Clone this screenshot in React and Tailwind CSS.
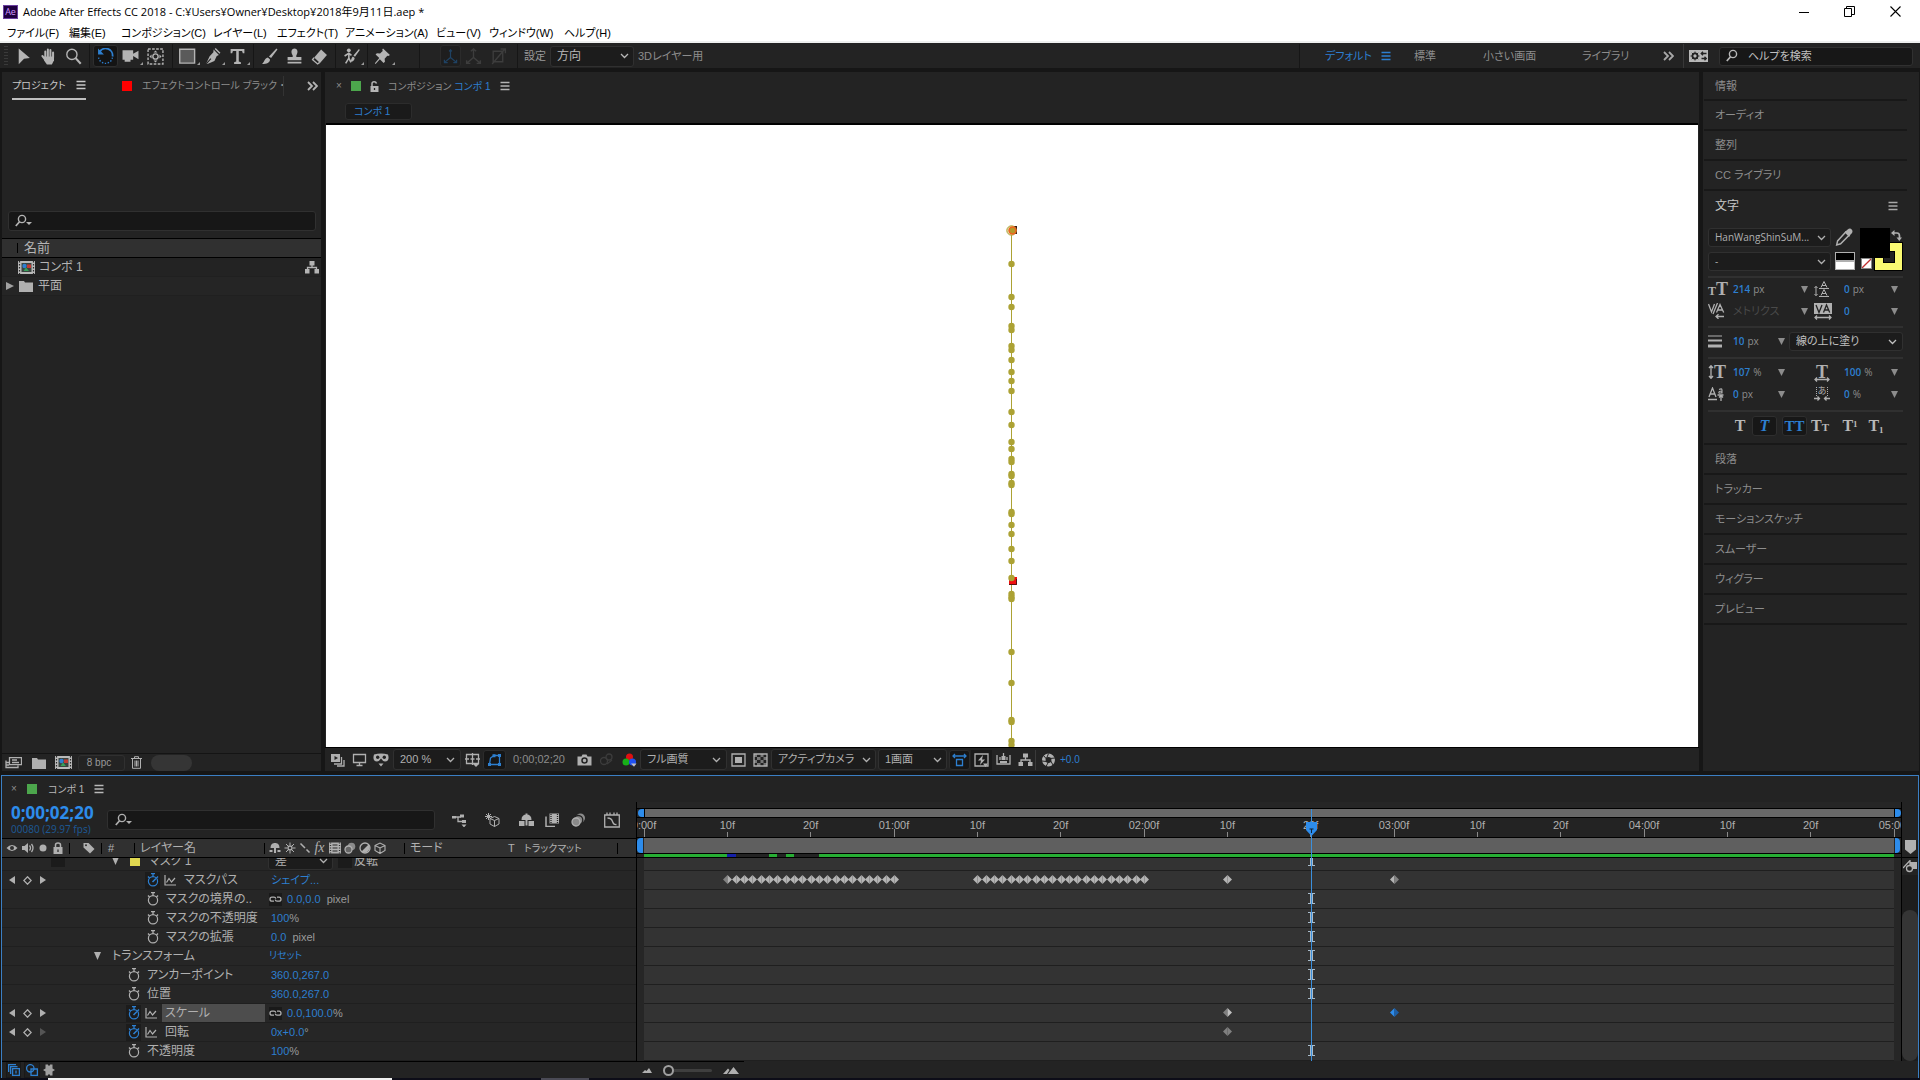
import React from "react";

const JP = "font-['Liberation_Sans','Noto_Sans_CJK_JP',sans-serif] [font-feature-settings:'palt']";

/* ---------- shared pieces ---------- */

function Icon({ children, className = "size-4", box = "0 0 16 16" }) {
  return (
    <svg viewBox={box} className={`shrink-0 ${className}`} fill="none" stroke="currentColor" strokeWidth="1.3" aria-hidden="true">
      {children}
    </svg>
  );
}

function Burger({ className = "" }) {
  return (
    <button aria-label="パネルメニュー" className={`flex h-4 shrink-0 items-center ${className}`}>
      <Icon className="size-[10px]" box="0 0 10 10">
        <path d="M0.5 1.5h9M0.5 5h9M0.5 8.5h9" />
      </Icon>
    </button>
  );
}

function DoubleChevron() {
  return (
    <Icon className="h-[10px] w-[11px]" box="0 0 11 10">
      <path d="M1 1l4 4-4 4M6 1l4 4-4 4" strokeWidth="1.8" />
    </Icon>
  );
}

function Select({ options, label, className = "", chevron = "right-2", text = "text-[11px]" }) {
  return (
    <label className={`relative flex shrink-0 items-center rounded-[3px] border border-[#303030] bg-[#1c1c1c] ${className}`}>
      <select aria-label={label} className={`h-full w-full appearance-none truncate bg-transparent pl-[6px] pr-4 leading-[15px] outline-none ${text}`}>
        {options.map((o) => (
          <option key={o}>{o}</option>
        ))}
      </select>
      <Icon className={`pointer-events-none absolute h-[6px] w-[9px] ${chevron}`} box="0 0 9 6">
        <path d="M1 1l3.500 3.500L8 1" />
      </Icon>
    </label>
  );
}

function SearchGlyph({ caret }) {
  return (
    <Icon className="h-[14px] w-[18px]" box="0 0 18 14">
      <circle cx="7" cy="5" r="3.600" strokeWidth="1.4" />
      <path d="M4.500 7.800L0.800 12" strokeWidth="1.7" />
      {caret && <path d="M11 8h6l-3 3z" fill="currentColor" stroke="none" />}
    </Icon>
  );
}

function Down({ className = "" }) {
  return (
    <Icon className={`h-[7px] w-[7px] ${className}`} box="0 0 7 7">
      <path d="M0 0h7L3.500 7z" fill="#8c8c8c" stroke="none" />
    </Icon>
  );
}

function FlowIcon({ className = "h-[13px] w-[14px]" }) {
  return (
    <Icon className={className} box="0 0 14 13">
      <path d="M4.500 0h5v4.500h-5zM0 8h4.500v4.500H0zM9.500 8H14v4.500H9.500z" fill="currentColor" stroke="none" />
      <path d="M7 4v2.500M2.500 8V6.500h9V8" />
    </Icon>
  );
}

function CompIcon() {
  return (
    <Icon className="h-[13px] w-[17px]" box="0 0 17 13">
      <path d="M0 0h17v13H0z" fill="#b9b9b9" stroke="none" />
      <path d="M1.500 0v13M15.500 0v13" stroke="#2b2b2b" strokeWidth="1.2" strokeDasharray="1.500 1.500" />
      <path d="M3.500 2h10v9h-10z" fill="#3a4440" stroke="none" />
      <circle cx="6.500" cy="5" r="2.200" fill="#2f7fd0" stroke="none" />
      <path d="M9 3.500h4v3.500H9z" fill="#c23a32" stroke="none" />
      <path d="M5.500 10l2.500-3.500 3 3.500z" fill="#37a05a" stroke="none" />
    </Icon>
  );
}

function FolderIcon() {
  return (
    <Icon className="h-[12px] w-[14px]" box="0 0 14 12">
      <path d="M0 1h5l1 1.500H14V12H0z" fill="#b0b0b0" stroke="none" />
    </Icon>
  );
}

/* ---------- window chrome ---------- */

const MENUS = [
  ["ファイル(F)", "w-[62px]"],
  ["編集(E)", "w-[52px]"],
  ["コンポジション(C)", "w-[92px]"],
  ["レイヤー(L)", "w-[64px]"],
  ["エフェクト(T)", "w-[68px]"],
  ["アニメーション(A)", "w-[91px]"],
  ["ビュー(V)", "w-[53px]"],
  ["ウィンドウ(W)", "w-[75px]"],
  ["ヘルプ(H)", "w-[60px]"],
];

function TitleBar() {
  return (
    <header className="shrink-0 border-b-2 border-[#eef0ef] bg-white text-black">
      <div className="flex h-[23px] items-center">
        <span className="ml-[3px] flex h-[14px] w-[15px] items-center justify-center border border-[#6b3fa0] bg-[#1f0040] font-['Open_Sans'] text-[9px] leading-none text-[#cf96fd]">
          Ae
        </span>
        <h1 className="ml-[5px] font-['Open_Sans','Noto_Sans_CJK_JP',sans-serif] text-[11px] leading-[16px]">
          Adobe After Effects CC 2018 - C:¥Users¥Owner¥Desktop¥2018年9月11日.aep *
        </h1>
        <div className="ml-auto flex items-center pr-[2px]">
          <button aria-label="最小化" className="flex h-5 w-[45px] items-center justify-center">
            <Icon className="size-[10px]" box="0 0 10 10"><path d="M0 5.500h10" strokeWidth="1" /></Icon>
          </button>
          <button aria-label="元に戻す" className="flex h-5 w-[46px] items-center justify-center">
            <Icon className="size-[11px]" box="0 0 11 11"><path d="M0.500 2.500h7v8h-7zM2.500 2.500v-2h8v8h-3" strokeWidth="1" /></Icon>
          </button>
          <button aria-label="閉じる" className="flex h-5 w-[46px] items-center justify-center">
            <Icon className="size-[11px]" box="0 0 11 11"><path d="M0.500 0.500l10 10M10.500 0.500l-10 10" strokeWidth="1.1" /></Icon>
          </button>
        </div>
      </div>
      <nav className="flex h-[18px] items-center pl-[7px] pt-[2px] text-[11px] leading-[16px]">
        {MENUS.map(([t, w]) => (
          <button key={t} className={`shrink-0 whitespace-nowrap text-left ${w}`}>{t}</button>
        ))}
      </nav>
    </header>
  );
}

function Tool({ label, children, active, more, dim }) {
  return (
    <button
      aria-label={label}
      className={`relative flex h-[22px] w-[25px] shrink-0 items-center justify-center rounded-[3px] ${active ? "border border-[#2e2e2e] bg-[#141414] text-[#2d7fd0]" : dim ? "text-[#3d3d3d]" : "text-[#b4b4b4]"}`}
    >
      <Icon className="size-[17px]">{children}</Icon>
      {more && <span className="absolute bottom-[2px] right-0 size-[3px] bg-[#9a9a9a] [clip-path:polygon(100%_0,100%_100%,0_100%)]" />}
    </button>
  );
}

function Bar({ className = "mx-[3px]" }) {
  return <span className={`h-[24px] w-px shrink-0 bg-[#161616] ${className}`} />;
}

function ToolBar() {
  const f = { fill: "currentColor", stroke: "none" };
  return (
    <div className="flex h-[25px] shrink-0 items-center bg-[#232323] pt-px text-[11px] text-[#8d8d8d]">
      <span className="ml-1 mr-[3px] h-[20px] w-1 shrink-0 bg-[repeating-linear-gradient(#3a3a3a_0_1px,transparent_1px_3px)]" />
      <Tool label="選択ツール"><path d="M3.500 0.500L14 9.500l-5.500 0.700-5 5z" {...f} /></Tool>
      <Tool label="手のひらツール">
        <path d="M5 9V3.200M7.400 8V1.500M9.800 8V2M12.300 9V4.300M5.500 12L2.200 7.500" strokeWidth="1.900" strokeLinecap="round" />
        <path d="M4.200 8h9v3.500l-2 4H6.500L4 12z" {...f} />
      </Tool>
      <Tool label="ズームツール"><circle cx="6.500" cy="6" r="4.800" /><path d="M10 9.500l4.800 5.300" strokeWidth="2" /></Tool>
      <Bar />
      <Tool label="回転ツール" active>
        <path d="M2.500 3.500A6.600 6.600 0 0 1 14.600 8" strokeWidth="1.700" />
        <path d="M14.500 9a6.600 6.600 0 0 1-13 0" strokeDasharray="1.300 1.500" />
        <path d="M1 0.500V6h5.500z" {...f} />
      </Tool>
      <Tool label="カメラツール" more><path d="M0.500 2h10v3.500l5-3v8l-5-3V11H8v2H2.500v-2h-2z" {...f} /></Tool>
      <Tool label="アンカーポイントツール">
        <path d="M1 1h14v14H1z" strokeDasharray="2.500 1.300" />
        <circle cx="8" cy="8" r="2.500" />
        <path d="M8 2.300l1.800 2H6.200zM8 13.700l1.800-2H6.200zM2.300 8l2-1.800v3.600zM13.700 8l-2-1.800v3.600z" {...f} />
      </Tool>
      <Bar className="ml-1 mr-[2px]" />
      <Tool label="長方形ツール" more><path d="M0.700 1.200h14v13h-14z" fill="#5a5a5a" /></Tool>
      <Tool label="ペンツール" more>
        <path d="M9 1.500l5 5-2 1-2.200 4.700-6.600 2.800L2.300 14l3-6.300L8.800 4zM11 0l4.500 4.500-1 1L10 1z" {...f} />
        <path d="M2.500 14.500l4-4.500" stroke="#232323" strokeWidth="1" />
      </Tool>
      <Tool label="文字ツール" more><path d="M1.500 1h13v4H13L12.300 2.800H9.200v10l2 0.700V15h-6.400v-1.500l2-0.700v-10H3.700L3 5H1.500z" {...f} /></Tool>
      <Bar />
      <Tool label="ブラシツール"><path d="M14.500 0.500l1 1-6 8-2-1.500zM6.500 9l2 1.800c0 3-3 4.200-7.500 4.200 2-1 1.800-5 5.500-6z" {...f} /></Tool>
      <Tool label="コピースタンプツール"><path d="M6.300 7C4 3.500 5.500 0.500 8 0.500S12 3.500 9.700 7v1.500H14.500v3h-13v-3h4.800zM1.500 13h13v1.500h-13z" {...f} /></Tool>
      <Tool label="消しゴムツール"><path d="M9.500 1.500l5.500 5-6.500 7.500-5.500-5z" {...f} /><path d="M2.800 9.200L1.500 11l4.700 4 2-1.500" /></Tool>
      <Bar />
      <Tool label="ロトブラシツール" more>
        <circle cx="5.500" cy="2.200" r="1.800" {...f} />
        <path d="M5.500 4.500v5L2.500 14.500M5.500 9.500l2 4M1.500 7.500l4-2.500 2.500 2" strokeWidth="1.500" />
        <path d="M15 1l0.800 0.800-4.500 6.500-1.500-1.200zM9.300 8l1.700 1.500c-0.500 3-2 3.500-4.500 3.500 1.500-1 1-4 2.800-5z" {...f} />
      </Tool>
      <Bar className="ml-[3px] mr-[2px]" />
      <Tool label="パペットピンツール" more><path d="M8.500 0.500l6.500 6-1.500 1-1-0.300L10 10l0.300 3-1.300 1-3.500-3.300L1.500 15l-0.700-0.700L5 9.500 1.500 6.200l1.200-1.200 3 0.200L8.200 2.800 7.800 1.500z" {...f} /></Tool>
      <Bar className="ml-[24px] mr-[20px]" />
      <span className="flex text-[#1f4263]">
        <button aria-label="ローカル軸モード" className="flex h-[22px] w-[21px] items-center justify-center rounded-[3px] border border-[#2b2b2b] bg-[#1e1e1e]">
          <Icon className="size-[15px]"><path d="M8 9V1M8 9l-6 5M8 9l6 5M6.500 2.500L8 0.800l1.500 1.700M1.500 11.500v3H5M14.500 11.500v3H11" /></Icon>
        </button>
      </span>
      <Tool label="ワールド軸モード" dim><path d="M8 9V1M8 9l-6 5M8 9l6 5M5.500 3L8 0.800 10.500 3M1.500 11.500v3H5M14.500 11.500v3H11" /></Tool>
      <Tool label="ビュー軸モード" dim><path d="M3 3h9v10H3zM2 15L14 1M10 1h4.500v4" /></Tool>
      <Bar className="ml-[6px] mr-[6px]" />
      <span className="w-[26px] shrink-0 text-[#9a9a9a]">設定</span>
      <Select label="設定" options={["方向"]} className="h-[21px] w-[84px] text-[#b8b8b8]" chevron="right-1" text="text-[12px]" />
      <span className="ml-[4px] shrink-0">3Dレイヤー用</span>

      <div className="ml-auto flex h-full shrink-0 items-center">
        <Bar className="mr-[25px]" />
        <button className="w-[56px] text-left text-[#2d7fd0]">デフォルト</button>
        <Burger className="w-[33px] text-[#2d7fd0]" />
        <button className="w-[69px] text-left">標準</button>
        <button className="w-[99px] text-left">小さい画面</button>
        <button className="w-[81px] text-left">ライブラリ</button>
        <button aria-label="その他のワークスペース" className="w-[20px] text-[#a8a8a8]"><DoubleChevron /></button>
        <span className="mr-[5px] h-full w-px bg-[#383838]" />
        <button aria-label="同期設定" className="mr-[11px] text-[#b8b8b8]">
          <Icon className="h-[12px] w-[19px]" box="0 0 19 12">
            <path d="M0 0h19v12H0z" fill="currentColor" stroke="none" />
            <circle cx="6" cy="6" r="2.600" stroke="#232323" strokeWidth="1.600" />
            <path d="M6 1.500v9M1.500 6h9M2.800 2.800l6.400 6.400M9.200 2.800L2.800 9.200" stroke="#232323" strokeWidth="0.900" />
            <circle cx="6" cy="6" r="1.400" fill="currentColor" stroke="none" />
            <path d="M12.500 3.500h5M14 1.700l-1.800 1.800L14 5.300M17 8.500h-4.500M15.500 6.700l1.800 1.800-1.800 1.800" stroke="#232323" />
          </Icon>
        </button>
        <label className="mr-[7px] flex h-[19px] w-[194px] items-center rounded-[3px] border border-[#303030] bg-[#171717] pl-[6px] text-[#b8b8b8]">
          <SearchGlyph />
          <input aria-label="ヘルプを検索" placeholder="ヘルプを検索" className="ml-[4px] w-full bg-transparent outline-none placeholder:text-[#c0c0c0]" />
        </label>
      </div>
    </div>
  );
}

/* ---------- project panel ---------- */

function ProjectPanel() {
  return (
    <section className="flex w-[319px] shrink-0 flex-col bg-[#232323] text-[12px] text-[#b4b4b4]">
      <div className="flex h-[28px] items-center pl-[10px]">
        <div className="mt-[3px] flex h-[25px] w-[74px] shrink-0 items-center justify-between border-b-2 border-[#c0c0c0] pb-[3px] text-[#c8c8c8]">
          <button className="whitespace-nowrap text-[10px]">プロジェクト</button>
          <Burger />
        </div>
        <span className="ml-[36px] size-[10px] shrink-0 bg-[#f00]" />
        <button className="ml-[10px] h-[20px] w-[142px] shrink-0 overflow-hidden whitespace-nowrap border-r border-[#333] text-left text-[10px] leading-[20px] text-[#8d8d8d]">
          エフェクトコントロール ブラック ・
        </button>
        <button aria-label="その他のタブ" className="ml-[23px] text-[#b4b4b4]"><DoubleChevron /></button>
      </div>
      <label className="ml-[6px] mr-[5px] mt-[111px] flex h-[20px] items-center rounded-[3px] border border-[#303030] bg-[#171717] pl-[6px]">
        <SearchGlyph caret />
        <input aria-label="プロジェクトを検索" className="w-full bg-transparent outline-none" />
      </label>
      <div className="mt-[7px] flex h-[20px] items-center border-y border-black bg-[#303030] pl-[15px]">
        <span className="h-[10px] w-px bg-black" />
        <span className="ml-[6px] text-[13px] leading-[18px]">名前</span>
      </div>
      <div className="flex h-[19px] items-center border-b border-[#202020] pl-[16px] pr-[2px]">
        <CompIcon />
        <span className="ml-[4px] flex-1 leading-[18px]">コンポ 1</span>
        <FlowIcon />
      </div>
      <div className="flex h-[19px] items-center border-b border-[#202020] bg-[#252525] pl-[4px]">
        <button aria-label="平面を展開" className="mr-[5px]">
          <Icon className="h-[8px] w-[8px]" box="0 0 8 8"><path d="M0 0l8 4-8 4z" fill="#a0a0a0" stroke="none" /></Icon>
        </button>
        <FolderIcon />
        <span className="ml-[5px] leading-[18px]">平面</span>
      </div>
      <div className="mt-auto flex h-[18px] items-center border-t border-[#141414] pl-[3px] text-[#b0b0b0]">
        <button aria-label="フッテージを変換" className="w-[27px]">
          <Icon className="h-[12px] w-[17px]" box="0 0 17 12"><path d="M4.500 0.700h12v7h-12zM7 3h5M7 5.500h7M1 3.500v7h12v-2M1 5.500h3M1 8h3" /></Icon>
        </button>
        <button aria-label="新規フォルダー" className="w-[23px]"><FolderIcon /></button>
        <button aria-label="新規コンポジション" className="w-[23px]"><CompIcon /></button>
        <button className="h-[16px] w-[47px] rounded-[3px] border border-[#303030] pr-[5px] text-[10px] leading-[14px] text-[#9a9a9a]">8 bpc</button>
        <button aria-label="削除" className="ml-[6px]">
          <Icon className="h-[13px] w-[11px]" box="0 0 11 13"><path d="M0 2.500h11M3.500 2.500v-1.800h4v1.800M1.500 2.500v9.800h8V2.500M4 4.500v6M5.500 4.500v6M7 4.500v6" strokeWidth="1" /></Icon>
        </button>
        <span className="ml-[9px] h-[16px] w-[41px] rounded-full bg-[#353535]" />
      </div>
    </section>
  );
}

/* ---------- composition viewer ---------- */

const DOTS = [
  139, 172, 182, 201, 205, 221, 225, 235, 247, 256, 266, 287, 300, 317, 324, 334, 337, 349, 351, 358, 360, 387, 389,
  400, 409, 424, 436, 453, 469, 472, 474, 527, 558, 595, 597, 616, 620,
];

function MotionPath() {
  return (
    <svg className="absolute inset-y-0 left-1/2 -ml-3 h-full w-5" aria-label="モーションパス">
      <rect x="10" y="101" width="7" height="8" fill="#3c1a10" />
      <path d="M11.500 110V660" stroke="#aca234" />
      <rect x="9" y="452" width="8" height="8" fill="#f01010" />
      <path d="M9 459.500h7.500V454" stroke="#5c1010" fill="none" />
      {DOTS.map((y) => (
        <circle key={y} cx="11.500" cy={y} r="3.200" fill="#aca234" />
      ))}
      <circle cx="11.500" cy="105.500" r="4.700" fill="#e6dcae" stroke="#aca234" strokeWidth="1" />
      <circle cx="12.500" cy="105.500" r="3.400" fill="#b49a2c" stroke="#f0641e" strokeWidth="1.500" />
    </svg>
  );
}

function VBtn({ label, children, className = "", box, size = "h-[14px] w-[15px]" }) {
  return (
    <button aria-label={label} className={`flex h-[20px] shrink-0 items-center justify-center ${className}`}>
      <Icon className={size} box={box || "0 0 15 14"}>{children}</Icon>
    </button>
  );
}

function CompositionPanel() {
  const f = { fill: "currentColor", stroke: "none" };
  return (
    <section className="flex min-w-0 flex-1 flex-col bg-[#232323] text-[11px] text-[#8d8d8d]">
      <div className="flex h-[28px] items-center pl-[11px]">
        <button aria-label="閉じる" className="w-[15px] text-left text-[10px] leading-none">×</button>
        <span className="size-[10px] bg-[#4ca64c]" />
        <button aria-label="ロック" className="ml-[9px] text-[#b4b4b4]">
          <Icon className="h-[11px] w-[9px]" box="0 0 9 11"><path d="M0.500 5h8v6h-8z" {...f} /><path d="M2 5V2.500Q2 0.800 4 0.800T6.500 2.500" strokeWidth="1.500" /><path d="M4.500 7v2" stroke="#232323" /></Icon>
        </button>
        <button className="ml-[9px] whitespace-nowrap text-[10px]">
          コンポジション <span className="text-[#2d7fd0]">コンポ 1</span>
        </button>
        <Burger className="ml-[9px] text-[#b4b4b4]" />
      </div>
      <div className="flex h-[23px] items-center pl-[20px]">
        <button className="h-[17px] w-[67px] rounded-[3px] border border-[#2c2c2c] bg-[#1a1a1a] pl-[8px] text-left text-[10px] leading-[15px] text-[#2d7fd0]">コンポ 1</button>
      </div>
      <div className="relative mx-px min-h-0 flex-1 overflow-hidden border-t-2 border-black bg-white">
        <MotionPath />
      </div>
      <div className="flex h-[24px] shrink-0 items-center border-t border-black pl-px text-[#b0b0b0]">
        <VBtn label="常にプレビュー" className="w-[23px]"><path d="M1 1h9v8H1z" {...f} /><path d="M4.500 3v4l3.500-2z" fill="#232323" stroke="none" /><path d="M11.500 4v7H4M14 7v6H7" /></VBtn>
        <VBtn label="メインビューアー" className="w-[20px]"><path d="M1.500 1.500h12v8h-12zM7.500 10v2M4.500 12.500h6" /></VBtn>
        <VBtn label="ビューアーオプション" className="mx-[2px] w-[20px]" box="0 0 16 14" size="h-[14px] w-[16px]"><path d="M1 1.500Q8-0.500 15 1.500 17 8 12 8.500 9.500 8 8 5.500 6.500 8 4 8.500-1 8 1 1.500zM5.500 10.500h5L8 13.500z" {...f} /><circle cx="4.700" cy="4.300" r="1.700" fill="#232323" stroke="none" /><circle cx="11.300" cy="4.300" r="1.700" fill="#232323" stroke="none" /></VBtn>
        <Select label="拡大率" options={["200 %"]} className="h-[21px] w-[68px]" chevron="right-[5px]" />
        <VBtn label="グリッド" className="w-[22px]"><path d="M1.500 1.500h12v9h-12zM7.500 0v4M7.500 8v4M0 6h4M11 6h4M5.500 6h4M7.500 4v4" /><path d="M8 11h6l-3 3z" {...f} /></VBtn>
        <VBtn label="マスクの表示" className="h-[20px] w-[23px] rounded-[3px] border border-[#2c2c2c] bg-[#161616] text-[#2d7fd0]"><path d="M2.500 11.500L3.500 5 7 2.500h5.500v9z" /><path d="M1 10h3v3H1zM11 10h3v3h-3zM11 1h3v3h-3zM5.500 1.200h3v3h-3z" {...f} /></VBtn>
        <span className="ml-[7px] w-[60px] text-[11px] text-[#8d8d8d]">0;00;02;20</span>
        <VBtn label="スナップショット" className="w-[22px]"><path d="M0.500 3.500h4L5.500 1.500h4l1 2h4v9H0.500z" {...f} /><circle cx="7.500" cy="7.500" r="2.500" stroke="#232323" strokeWidth="1.500" /></VBtn>
        <VBtn label="スナップショットを表示" className="w-[23px] text-[#3c3c3c]"><circle cx="5" cy="8" r="3.500" /><circle cx="10" cy="4" r="3" /><path d="M8 11l5-4" /></VBtn>
        <VBtn label="チャンネル" className="w-[22px]"><circle cx="7.500" cy="4" r="3.500" fill="#e01010" stroke="none" /><circle cx="4" cy="9" r="3.500" fill="#18b018" stroke="none" /><circle cx="10.500" cy="9" r="3.500" fill="#2050f0" stroke="none" /><path d="M9 10.500h5.500L12 13.800z" fill="#c0c0c0" stroke="none" /></VBtn>
        <Select label="解像度" options={["フル画質"]} className="h-[21px] w-[87px]" chevron="right-[5px]" />
        <VBtn label="目標範囲" className="w-[22px]"><path d="M1 1h13v12H1z" /><path d="M4 4h7v6H4z" {...f} /></VBtn>
        <VBtn label="透明グリッド" className="w-[22px]"><path d="M1 1h13v12H1z" /><path d="M1 1h3v3H1zM7.500 1h3v3h-3zM4 4h3.500v3H4zM10.500 4H14v3h-3.500zM1 7h3v3H1zM7.500 7h3v3h-3zM4 10h3.500v3H4zM10.500 10H14v3h-3.500z" {...f} opacity="0.6" /></VBtn>
        <Select label="3D ビュー" options={["アクティブカメラ"]} className="h-[21px] w-[105px]" chevron="right-[4px]" />
        <Select label="ビューのレイアウト" options={["1画面"]} className="ml-[2px] h-[21px] w-[69px]" chevron="right-[4px]" />
        <VBtn label="ピクセル縦横比補正" className="ml-[2px] h-[20px] w-[21px] rounded-[3px] border border-[#2c2c2c] bg-[#161616] text-[#2d7fd0]"><path d="M1 3h13M3 1L1 3l2 2M12 1l2 2-2 2M4.500 6.500h6v6h-6z" /></VBtn>
        <VBtn label="高速プレビュー" className="ml-px w-[21px] bg-[#1a1a1a]"><path d="M1 1h13v12H1z" /><path d="M9 2L4 7.500h3L6 12l5-5.500H8zM9 10.500h5L11.500 14z" {...f} /></VBtn>
        <VBtn label="タイムライン" className="w-[23px]"><path d="M1 2v9h13V2M4 4v3M11 4v3" /><path d="M5.500 3h4v4h-4zM4 8h7v2H4z" {...f} /><path d="M7.500 0v5" /></VBtn>
        <VBtn label="フローチャート" className="w-[20px]"><path d="M5 0.500h5v4H5zM0.500 9H5v4H0.500zM10 9h4.500v4H10z" {...f} /><path d="M7.500 4v3M3 9V7h9v2" /></VBtn>
        <span className="h-[20px] w-px bg-[#3a3a3a]" />
        <VBtn label="露出をリセット" className="w-[24px]"><circle cx="7.500" cy="7" r="4.700" strokeWidth="3.500" /><path d="M7.500 0.500l-2 5M14 5l-5.300 0.500M12 12L9.500 7.500M5 13.500L7.500 9M1 8l4.500 0.500M2.500 2.500L5.500 6" stroke="#232323" strokeWidth="1" /></VBtn>
        <button className="text-[10px] text-[#2d7fd0]">+0.0</button>
      </div>
    </section>
  );
}

/* ---------- right dock ---------- */

const dockRow = "flex h-[30px] shrink-0 items-center border-b-2 border-[#181818] pl-[11px] pt-px text-left text-[11px] text-[#8d8d8d]";

function Num({ v, u, label }) {
  return (
    <label className="flex items-baseline gap-[3px] text-[10px] text-[#8d8d8d]">
      <input aria-label={label} defaultValue={v} size={v.length} className="field-sizing-content bg-transparent font-['Open_Sans'] font-semibold text-[#2d7fd0] outline-none" />
      {u && <span className="font-['Open_Sans']">{u}</span>}
    </label>
  );
}

const serif = "font-['Liberation_Serif'] leading-none";

function CharacterPanel() {
  const wide = "grid h-[22px] grid-cols-[25px_68px_13px_30px_47px_12px] items-center";
  const narrow = "grid h-[22px] grid-cols-[25px_45px_36px_30px_47px_12px] items-center";
  const rule = "h-[2px] bg-[#303030]";
  return (
    <div className="shrink-0 border-b-2 border-[#181818]">
      <div className="flex h-[30px] items-center pl-[11px] text-[11px] text-[#c8c8c8]">
        <h2 className="text-[12px]">文字</h2>
        <Burger className="ml-auto mr-[9px] text-[#a8a8a8]" />
      </div>
      <div className="ml-[4px] mr-[5px] w-[195px] py-[7px] text-[#b0b0b0]">
        <div className="flex">
          <div className="flex w-[123px] flex-col gap-[5px] font-['Open_Sans']">
            <Select label="フォントファミリー" options={["HanWangShinSuM..."]} className="h-[19px]" chevron="right-1" text="text-[10px]" />
            <Select label="フォントスタイル" options={["-"]} className="h-[19px]" chevron="right-1" text="text-[10px]" />
          </div>
          <div className="ml-[4px] flex w-[25px] flex-col gap-[7px]">
            <button aria-label="スポイト">
              <Icon className="size-[18px]"><path d="M9.500 3.500l3 3L5 14l-3.500 1L2.300 11.500z" /><path d="M11 1.500Q13.500-0.500 15 1.500T14 5.500L12.500 8 8.500 3.800z" fill="currentColor" stroke="none" /></Icon>
            </button>
            <button aria-label="白黒に設定" className="-mt-px flex h-[18px] w-[20px] flex-col border border-[#b0b0b0]">
              <span className="h-[7px] w-full bg-black" />
              <span className="w-full flex-1 border-t-2 border-[#b0b0b0] bg-white" />
            </button>
          </div>
          <div className="relative h-[43px] w-[43px]">
            <button aria-label="線のカラー" className="absolute bottom-0 right-0 flex size-[29px] items-center justify-center border border-black bg-[#fbfb72]">
              <span className="size-[12px] border border-black bg-[#232323]" />
            </button>
            <button aria-label="塗りのカラー" className="absolute left-0 top-0 size-[30px] bg-black" />
            <button aria-label="カラーなし" className="absolute bottom-[2px] left-px size-[11px] border border-[#888] bg-white">
              <Icon className="size-[9px]" box="0 0 9 9"><path d="M0 9L9 0" stroke="#c03030" /></Icon>
            </button>
            <button aria-label="塗りと線を入れ替え" className="absolute right-[1px] top-[2px]">
              <Icon className="size-[11px]" box="0 0 11 11"><path d="M2 3h4q2.500 0 2.500 3v2" strokeWidth="1.700" /><path d="M3.500 0v6L0 3zM5.500 7.500h5.500L8.300 11z" fill="currentColor" stroke="none" /></Icon>
            </button>
          </div>
        </div>
        <div className={`mt-[5px] ${rule}`} />
        <div className={wide}>
          <span className={`${serif} text-[18px] font-bold`}><span className="text-[12px]">T</span>T</span>
          <Num v="214" u="px" label="フォントサイズ" />
          <Down />
          <Icon className="size-[16px]"><path d="M2 5.500v9M0.500 7L2 5.300 3.500 7M0.500 13L2 14.700 3.500 13M5 15.500h10M5 7.500h10" strokeWidth="1" /><path d="M7 6.500L10 0.500l3 6M8 4.500h4M7 14.500l3-6 3 6M8 12.500h4" strokeWidth="1" /></Icon>
          <Num v="0" u="px" label="行送り" />
          <Down />
        </div>
        <div className={wide}>
          <span className="flex flex-col">
            <Icon className="h-[16px] w-[17px]" box="0 0 17 16"><path d="M0.500 1l3 8 3-8M5 11L9.500 0M8.500 9.500L12 1.500l3.700 8M9.800 7h4.500M8 13.500h8M10.500 11.200L8 13.500l2.500 2.300" /></Icon>
          </span>
          <button className="text-left text-[11px] text-[#4a4a4a]">メトリクス</button>
          <Down />
          <Icon className="h-[17px] w-[19px]" box="0 0 19 17"><path d="M0 0h18v11H0z" fill="currentColor" stroke="none" /><path d="M2 2l3 7.500L8 2M9.500 9.500L12.500 2l3.200 7.500M10.500 7h4" stroke="#232323" /><path d="M1 14.500h16M3 12.500l-2 2 2 2M15 12.500l2 2-2 2" /></Icon>
          <Num v="0" label="トラッキング" />
          <Down />
        </div>
        <div className={`mt-[4px] ${rule}`} />
        <div className="mt-[4px] flex h-[19px] items-center">
          <Icon className="mr-[11px] h-[13px] w-[14px]" box="0 0 14 13"><path d="M0 1h14" strokeWidth="1" /><path d="M0 5.500h14" strokeWidth="2" /><path d="M0 11h14" strokeWidth="3" /></Icon>
          <span className="w-[45px]"><Num v="10" u="px" label="線幅" /></span>
          <Down />
          <Select label="線の位置" options={["線の上に塗り"]} className="ml-auto h-[19px] w-[114px] text-[#c0c0c0]" chevron="right-[5px]" />
        </div>
        <div className={`mt-[6px] ${rule}`} />
        <div className={`mt-[2px] ${narrow}`}>
          <span className={`flex items-center ${serif} text-[18px] font-bold`}>
            <Icon className="h-[14px] w-[6px]" box="0 0 6 14"><path d="M3 1v12M1 3l2-2.300L5 3M1 11l2 2.300L5 11" /></Icon>T
          </span>
          <Num v="107" u="%" label="垂直比率" />
          <Down />
          <span className={`flex w-[16px] flex-col items-center ${serif} text-[18px] font-bold`}>
            <span className="h-[14px]">T</span>
            <Icon className="h-[5px] w-[16px]" box="0 0 16 5"><path d="M1 2.500h14M3 0.500l-2 2 2 2M13 0.500l2 2-2 2" /></Icon>
          </span>
          <Num v="100" u="%" label="水平比率" />
          <Down />
        </div>
        <div className={narrow}>
          <Icon className="h-[15px] w-[16px]" box="0 0 16 15"><path d="M1 10L4.500 1 8 10M2.300 7h4.500M0 12.500h9M13 14V9M11 10.500l2-2 2 2M9.500 8h6" /><path d="M11 2.500q3-1.500 3 0.500v3.500M14 4q-3.200 0-3.200 1.500T14 5.500" strokeWidth="1.100" /></Icon>
          <Num v="0" u="px" label="ベースラインシフト" />
          <Down />
          <span className="flex w-[16px] flex-col items-center text-[9px] leading-[9px]">
            <span className="border-x border-dotted border-[#b0b0b0] px-px">あ</span>
            <Icon className="h-[5px] w-[16px]" box="0 0 16 5"><path d="M0 2.500h5M3.500 0.500l2 2-2 2M16 2.500h-5M12.500 0.500l-2 2 2 2" /></Icon>
          </span>
          <Num v="0" u="%" label="文字ツメ" />
          <Down />
        </div>
        <div className={`mt-[5px] ${rule}`} />
        <div className={`mt-[4px] flex h-[20px] items-center pl-[21px] text-[#b8b8b8] ${serif} text-[16px]`}>
          <button aria-label="太字" className="w-[22px] font-black">T</button>
          <button aria-label="斜体" className="ml-px h-full w-[25px] rounded-[3px] border border-[#2e2e2e] bg-[#171717] font-bold italic text-[#2d7fd0]">T</button>
          <button aria-label="オールキャップス" className="ml-[5px] h-full w-[25px] rounded-[3px] border border-[#2e2e2e] bg-[#171717] text-[15px] font-bold text-[#2d7fd0]">TT</button>
          <button aria-label="スモールキャップス" className="w-[26px] font-bold">T<span className="text-[11px]">T</span></button>
          <button aria-label="上付き文字" className="ml-[4px] w-[26px] font-bold">T<sup className="text-[9px]">1</sup></button>
          <button aria-label="下付き文字" className="w-[26px] font-bold">T<sub className="text-[9px]">1</sub></button>
        </div>
      </div>
    </div>
  );
}

function RightDock() {
  return (
    <aside className="mr-px flex w-[216px] shrink-0 flex-col bg-[#232323]">
      <div className="flex flex-col pl-px pr-[12px]">
        <button className="flex h-[29px] items-center border-b-2 border-[#181818] pl-[11px] pt-px text-left text-[11px] text-[#8d8d8d]">情報</button>
        {["オーディオ", "整列", "CC ライブラリ"].map((t) => (
          <button key={t} className={dockRow}>{t}</button>
        ))}
        <CharacterPanel />
        {["段落", "トラッカー", "モーションスケッチ", "スムーザー", "ウィグラー", "プレビュー"].map((t) => (
          <button key={t} className={dockRow}>{t}</button>
        ))}
      </div>
    </aside>
  );
}

/* ---------- timeline ---------- */

const FRAMES = 150;
const pct = (frame) => `${(frame / FRAMES) * 100}%`;
const range = (a, b) => Array.from({ length: b - a + 1 }, (_, i) => a + i);

const ROWS = [
  { type: "mask" },
  { name: "マスクパス", depth: 1, keyed: true, value: "シェイプ...", next: true },
  { name: "マスクの境界の..", depth: 1, link: true, value: "0.0,0.0", unit: "  pixel", beam: true },
  { name: "マスクの不透明度", depth: 1, value: "100", unit: "%", beam: true },
  { name: "マスクの拡張", depth: 1, value: "0.0", unit: "  pixel", beam: true },
  { type: "group", name: "トランスフォーム", value: "リセット", beam: true },
  { name: "アンカーポイント", value: "360.0,267.0", beam: true },
  { name: "位置", value: "360.0,267.0", beam: true },
  { name: "スケール", keyed: true, link: true, value: "0.0,100.0", unit: "%", next: true, selected: true },
  { name: "回転", keyed: true, value: "0x+0.0", unit: "°" },
  { name: "不透明度", value: "100", unit: "%", beam: true },
];

const KEYS = {
  1: [
    { f: 10, l: "#808080", r: "#b4b4b4" },
    ...range(11, 30).map((f) => ({ f })),
    ...range(40, 60).map((f) => ({ f })),
    { f: 70 },
    { f: 90, l: "#b4b4b4", r: "#808080" },
  ],
  8: [
    { f: 70, l: "#808080", r: "#c0c0c0" },
    { f: 90, l: "#2d8ceb", r: "#1c5fa8" },
  ],
  9: [{ f: 70, l: "#808080", r: "#808080" }],
};

function Twirl() {
  return (
    <Icon className="h-[8px] w-[7px]" box="0 0 7 8"><path d="M0 0h7L3.500 8z" fill="#b0b0b0" stroke="none" /></Icon>
  );
}

function Stopwatch({ on }) {
  return (
    <button
      aria-label="ストップウォッチ"
      className={`flex h-[17px] w-[15px] shrink-0 items-center justify-center ${on ? "bg-[#1c1c1c] text-[#2d7fd0]" : "text-[#b0b0b0]"}`}
    >
      <Icon className="h-[14px] w-[12px]" box="0 0 12 14">
        <circle cx="6" cy="8.300" r="4.600" strokeWidth="1.200" />
        <path d="M6 3.700V1M4 0.700h4M1 3.500l1.500 1.500M11 3.500L9.500 5" />
        {on && <path d="M5.500 9L9 5.500" strokeWidth="1.600" />}
      </Icon>
    </button>
  );
}

function LinkIcon() {
  return (
    <button aria-label="縦横比を固定" className="mr-[5px] flex h-[13px] w-[13px] items-center bg-[#191919] text-[#b0b0b0]">
      <Icon className="h-[7px] w-[13px]" box="0 0 13 7"><path d="M5 5.200H3A2 2 0 0 1 3 1.200h2q1.500 0 1.800 1.500M8 1.200h2a2 2 0 0 1 0 4H8q-1.500 0-1.800-1.500" /></Icon>
    </button>
  );
}

function PropertyRow({ row }) {
  const base = "flex h-[19px] shrink-0 items-center border-b border-[#1f1f1f] text-[12px] leading-[18px] text-[#b0b0b0]";
  if (row.type === "mask") {
    return (
      <div className={base}>
        <label className="ml-[49px] flex"><input type="checkbox" aria-label="ロック" className="h-[12px] w-[14px] appearance-none bg-[#1b1b1b]" /></label>
        <button aria-label="マスク 1 を折りたたむ" className="ml-[47px] flex"><Twirl /></button>
        <span className="ml-[11px] size-[10px] bg-[#e0d850]" />
        <span className="ml-[9px] w-[119px]">マスク 1</span>
        <Select label="マスクモード" options={["差"]} className="h-[18px] w-[65px]" chevron="right-[4px]" text="text-[12px]" />
        <label className="ml-[5px] flex items-center gap-[2px]">
          <input type="checkbox" className="h-[13px] w-[14px] appearance-none bg-[#1b1b1b]" />反転
        </label>
      </div>
    );
  }
  if (row.type === "group") {
    return (
      <div className={base}>
        <button aria-label="折りたたむ" className="ml-[92px] flex"><Twirl /></button>
        <span className="ml-[11px] w-[157px]">{row.name}</span>
        <button className="text-[10px] text-[#2d7fd0]">{row.value}</button>
      </div>
    );
  }
  return (
    <div className={base}>
      <div className={`flex shrink-0 items-center ${row.depth ? "w-[143px]" : "w-[124px]"}`}>
        {row.keyed && (
          <>
            <button aria-label="前のキーフレーム" className="ml-[7px]"><Icon className="h-[8px] w-[6px]" box="0 0 6 8"><path d="M6 0v8L0 4z" fill="currentColor" stroke="none" /></Icon></button>
            <button aria-label="キーフレームを追加" className="ml-[8px]"><Icon className="size-[9px]" box="0 0 9 9"><path d="M4.500 0.800l3.700 3.700-3.700 3.700L0.800 4.500z" /></Icon></button>
            <button aria-label="次のキーフレーム" className={`ml-[8px] ${row.next ? "" : "text-[#555]"}`}><Icon className="h-[8px] w-[6px]" box="0 0 6 8"><path d="M0 0v8l6-4z" fill="currentColor" stroke="none" /></Icon></button>
          </>
        )}
      </div>
      <Stopwatch on={row.keyed} />
      <div className={`flex h-full min-w-0 shrink-0 items-center whitespace-nowrap ${row.depth ? "w-[109px]" : "w-[128px]"}`}>
        {row.keyed && (
          <button aria-label="グラフエディターに含める" className="ml-[4px]">
            <Icon className="h-[11px] w-[12px]" box="0 0 12 11"><path d="M1 0v10h11M2.500 7.500L5 3.500l2.500 3.500L11 3" strokeWidth="1.200" /></Icon>
          </button>
        )}
        <span className={`flex h-[18px] items-center ${row.selected ? "ml-[5px] mr-[4px] flex-1 bg-[#4d4d4d] pl-[3px]" : row.keyed ? "ml-[8px]" : "ml-[6px]"}`}>{row.name}</span>
      </div>
      <div className={`flex items-center ${row.link ? "" : "pl-[2px]"}`}>
        {row.link && <LinkIcon />}
        <button className="whitespace-pre text-[11px] text-[#9a9a9a]">
          <span className="text-[#2d7fd0]">{row.value}</span>
          {row.unit}
        </button>
      </div>
    </div>
  );
}

function Key({ k }) {
  const l = k.l || "#b4b4b4";
  const r = k.r || "#b4b4b4";
  return (
    <svg viewBox="0 0 9 9" className="absolute top-[4px] -ml-1 size-[9px]" style={{ left: pct(k.f) }} aria-hidden="true">
      <path d="M4.500 0v9L0 4.500z" fill={l} />
      <path d="M4.500 0v9L9 4.500z" fill={r} />
    </svg>
  );
}

function Beam() {
  return (
    <svg viewBox="0 0 7 11" className="absolute top-[3px] -ml-[3px] h-[11px] w-[7px]" style={{ left: pct(80) }} fill="none" stroke="#a9bccb" aria-hidden="true">
      <path d="M0 0.500h7M0 10.500h7M2.500 0.500v10M4.500 0.500v10" />
    </svg>
  );
}

const CACHE = [
  [0, 10, "#27ae34"],
  [10, 11, "#1420a8"],
  [15, 16, "#27ae34"],
  [17, 18, "#27ae34"],
  [21, 150, "#27ae34"],
];

function label(f) {
  const s = Math.floor(f / 30);
  const r = f % 30;
  if (f === 0) return "0:00f";
  return r ? `${r}f` : `0${s}:00f`;
}

function Lanes() {
  return (
    <div className="relative flex min-w-0 flex-1 flex-col overflow-hidden bg-[#262626] pt-[6px]">
      <div className="flex h-[10px] shrink-0 items-stretch border-y border-black">
        <span className="ml-px w-[6px] rounded-l-full bg-[#2d8ceb]" />
        <span className="flex-1 border-x border-black bg-[#686868]" />
        <span className="w-[6px] rounded-r-full bg-[#2d8ceb]" />
      </div>
      <div className="relative h-[19px] shrink-0 bg-[#232323] px-[7px] text-[11px] leading-[14px] text-[#b0b0b0]">
        <div className="relative h-full">
          {range(0, 15).map((i) => (
            <div key={i} className="absolute inset-y-0 -ml-5 flex w-10 flex-col items-center justify-between" style={{ left: pct(i * 10) }}>
              <span>{label(i * 10)}</span>
              <span className={`absolute bottom-0 w-px bg-[#8a8a8a] ${i % 3 ? "h-[5px]" : "h-[8px]"}`} />
            </div>
          ))}
        </div>
      </div>
      <div className="flex h-[17px] shrink-0 items-stretch border-y border-black">
        <span className="w-[6px] rounded-l-[4px] bg-[#2d8ceb]" />
        <span className="ml-px flex-1 bg-[#5f5f5f]" />
        <span className="ml-px mr-px w-[5px] rounded-r-[4px] bg-[#2d8ceb]" />
      </div>
      <div className="h-[4px] shrink-0 border-b border-black px-[7px]">
        <div className="relative h-full bg-[#232323]">
          {CACHE.map(([a, b, c]) => (
            <span key={a} className="absolute inset-y-0" style={{ left: pct(a), width: pct(b - a), backgroundColor: c }} />
          ))}
        </div>
      </div>
      <div className="min-h-0 flex-1 overflow-hidden px-[7px]">
        <div className="-mt-[6px] bg-[#333]">
          {ROWS.map((row, i) => (
            <div key={i} className="relative h-[19px] border-b border-[#1f1f1f]">
              {(KEYS[i] || []).map((k) => <Key key={k.f} k={k} />)}
              {(row.beam || i === 0) && <Beam />}
            </div>
          ))}
        </div>
      </div>
      <div className="pointer-events-none absolute inset-y-0 left-[7px] right-[7px]">
        <div className="absolute bottom-0 top-[7px] w-px bg-[#3b8fdc]" style={{ left: pct(80) }} />
        <svg viewBox="0 0 11 14" className="absolute top-[20px] -ml-[5px] h-[14px] w-[11px]" style={{ left: pct(80) }} aria-label="現在の時間">
          <path d="M0 0h11v8l-5.500 6L0 8z" fill="#2d8ceb" />
          <path d="M3.500 7h4M5.500 7v4" stroke="#123" />
        </svg>
      </div>
    </div>
  );
}

function HeadIcon({ children, w = "w-[15px]", size = "size-[12px]" }) {
  return (
    <span className={`flex shrink-0 items-center justify-center ${w}`}>
      <Icon className={size} box="0 0 12 12">{children}</Icon>
    </span>
  );
}

function HSep({ className = "" }) {
  return <span className={`h-[11px] w-px shrink-0 bg-black ${className}`} />;
}

function LayerPane() {
  const f = { fill: "currentColor", stroke: "none" };
  return (
    <div className="flex w-[635px] shrink-0 flex-col border-r border-black">
      <div className="flex h-[36px] shrink-0 items-center pl-[9px]">
        <div className="w-[96px] shrink-0 font-['Noto_Sans',sans-serif]">
          <div className="whitespace-nowrap text-[17px] font-bold leading-[18px] text-[#2d8ceb]">0;00;02;20</div>
          <div className="whitespace-nowrap text-[10px] leading-[14px] text-[#1d568f]">00080 (29.97 fps)</div>
        </div>
        <label className="flex h-[20px] w-[328px] shrink-0 items-center rounded-[3px] border border-[#303030] bg-[#171717] pl-[7px] text-[#b0b0b0]">
          <SearchGlyph caret />
          <input aria-label="レイヤーを検索" className="w-full bg-transparent outline-none" />
        </label>
        <div className="ml-[16px] flex items-center text-[#b0b0b0]">
          <VBtn label="ミニフローチャート" className="w-[17px]"><path d="M0 3h4v2.500H0zM8 1.500h4v3H8zM10 7h4v3h-4z" {...f} /><path d="M3 4h6M6 4v4.500h5" /><path d="M9.500 11.500h5l-2.500 3z" {...f} /></VBtn>
          <VBtn label="ドラフト 3D" className="ml-[16px] w-[17px]"><path d="M5 5.500l4.500-2 4.500 2v5.500l-4.500 2.500L5 11zM5 5.500l4.500 2 4.500-2M9.500 7.500v6M3.500 0v7M0 3.500h7M1 1l5 5M6 1L1 6" strokeWidth="1" /></VBtn>
          <VBtn label="シャイ" className="ml-[17px] w-[17px]"><path d="M2.500 7Q2.500 1.500 7.500 1.500T12.500 7zM6.500 0.500h2v12h-2zM0 8h5.500v5H0zM9.500 8H15v5H9.500z" {...f} /></VBtn>
          <VBtn label="フレームブレンド" className="ml-[9px] w-[17px]"><path d="M4.500 0.500H14v10H4.500z" {...f} /><path d="M1 3.500v10h9" strokeWidth="1.500" /><path d="M6 1v9.500M12.500 1v9.500" stroke="#232323" strokeDasharray="1 1" /></VBtn>
          <VBtn label="モーションブラー" className="ml-[9px] w-[17px]"><circle cx="9.500" cy="5" r="4.500" {...f} opacity="0.75" /><circle cx="7.300" cy="7" r="4.500" stroke="#232323" fill="#8a8a8a" /><circle cx="5" cy="9" r="4" fill="#8a8a8a" /></VBtn>
          <VBtn label="グラフエディター" className="ml-[16px] w-[17px]" size="size-[16px]" box="0 0 16 16"><path d="M0.700 3h14.600v12H0.700zM3 0.500V3M6 0.500V3M10 0.500V3M13 0.500V3M3.500 6q4 0 5 3.500T12.500 12.500" /></VBtn>
        </div>
      </div>
      <div className="flex h-[20px] shrink-0 items-center border-y border-black bg-[#303030] text-[12px] text-[#b0b0b0]">
        <HeadIcon w="ml-[2px] w-[16px]"><path d="M0.500 6Q6 0 11.500 6 6 12 0.500 6z" {...f} /><circle cx="6" cy="6" r="2" fill="#303030" stroke="none" /></HeadIcon>
        <HeadIcon w="w-[16px]"><path d="M0 4h2.500L6 1v10L2.500 8H0z" {...f} /><path d="M7.500 3.500q2 2.500 0 5M9.500 2q3 4 0 8" /></HeadIcon>
        <HeadIcon w="w-[14px]"><circle cx="6" cy="6" r="3.500" {...f} /></HeadIcon>
        <HeadIcon w="w-[15px]"><path d="M1.500 5h9v7h-9z" {...f} /><path d="M3.500 5V3q0-2 2.500-2t2.500 2v2" strokeWidth="1.500" /><path d="M6 7.500v2.500" stroke="#303030" /></HeadIcon>
        <HSep className="ml-[4px]" />
        <HeadIcon w="ml-[10px] w-[17px]"><path d="M0.500 1h5l6 6-4.500 4.500-6.500-6z" {...f} /><circle cx="3" cy="3.300" r="1" fill="#303030" stroke="none" /></HeadIcon>
        <HSep className="ml-[4px]" />
        <span className="ml-[6px] w-[26px] text-[11px]">#</span>
        <HSep />
        <span className="ml-[5px] w-[124px] text-[12px]">レイヤー名</span>
        <HSep className="mr-[2px]" />
        <HeadIcon><path d="M1.500 6Q1.500 1 6 1t4.500 5zM5 1h2v10H5zM0.500 8h3v2h-3zM8.500 8h3v2h-3z" {...f} /></HeadIcon>
        <HeadIcon><circle cx="6" cy="6" r="2" /><path d="M6 0.500v2.500M6 9v2.500M0.500 6H3M9 6h2.500M2 2l2 2M8 8l2 2M10 2L8 4M4 8l-2 2" strokeWidth="1" /></HeadIcon>
        <HeadIcon><path d="M1.500 1.500l4.500 4.500M7.500 7.500l3 3" strokeWidth="1.500" /></HeadIcon>
        <span className="w-[15px] text-center font-['Liberation_Serif'] text-[14px] italic leading-none">fx</span>
        <HeadIcon><path d="M0 0.500h12v11H0z" {...f} /><path d="M1.500 0.500v11M10.500 0.500v11" stroke="#303030" strokeDasharray="1 1.500" /><path d="M3.500 3h5M3.500 6h5M3.500 9h5" stroke="#555" /></HeadIcon>
        <HeadIcon><circle cx="7.500" cy="4.500" r="3.800" {...f} opacity="0.7" /><circle cx="4.500" cy="7.500" r="3.500" fill="#666" /></HeadIcon>
        <HeadIcon><circle cx="6" cy="6" r="5" /><path d="M9.500 2.500a5 5 0 0 1-7 7z" {...f} /></HeadIcon>
        <HeadIcon><path d="M1 3.500L6 1l5 2.500v5L6 11.500 1 8.500zM1 3.500L6 6l5-2.500M6 6v5.500" strokeWidth="1.100" /></HeadIcon>
        <HSep className="ml-[17px]" />
        <span className="ml-[5px] w-[98px] text-[12px]">モード</span>
        <span className="w-[16px] text-[11px]">T</span>
        <span className="w-[93px] whitespace-nowrap text-[10px]">トラックマット</span>
        <HSep />
      </div>
      <div className="min-h-0 flex-1 overflow-hidden bg-[#262626]">
        <div className="-mt-[6px] flex flex-col">
          {ROWS.map((row, i) => <PropertyRow key={i} row={row} />)}
        </div>
      </div>
    </div>
  );
}

function Timeline() {
  const box = "flex h-[16px] items-center justify-center border border-[#191919] bg-[#1f1f1f] text-[#2d7fd0]";
  return (
    <section className="mx-px flex h-[303px] shrink-0 flex-col border-x border-t border-[#3b7fc4] bg-[#232323]">
      <div className="flex h-[26px] shrink-0 items-center pl-[9px] text-[12px] text-[#b8b8b8]">
        <button aria-label="閉じる" className="w-[16px] text-left text-[10px] leading-none text-[#8d8d8d]">×</button>
        <span className="size-[10px] bg-[#4ca64c]" />
        <button className="ml-[11px] text-[10px]">コンポ 1</button>
        <Burger className="ml-[10px]" />
      </div>
      <div className="flex min-h-0 flex-1">
        <LayerPane />
        <Lanes />
        <div className="flex w-[17px] shrink-0 flex-col border-l border-black bg-[#232323] text-[#b0b0b0]">
          <button aria-label="マーカー" className="mt-[38px] flex h-[18px] justify-center border-b border-black">
            <Icon className="h-[14px] w-[11px]" box="0 0 11 14"><path d="M0 0h11v9.500L5.500 14 0 9.500z" fill="currentColor" stroke="none" /></Icon>
          </button>
          <button aria-label="コンポジションボタン" className="flex h-[17px] items-center justify-center">
            <Icon className="h-[13px] w-[14px]" box="0 0 14 13"><path d="M7 2h7v7H7z" fill="currentColor" stroke="none" /><path d="M0 8L7 0.500V5" /><circle cx="6.500" cy="8.500" r="3" fill="#232323" /></Icon>
          </button>
          <div className="flex flex-1 flex-col bg-[#1d1d1d] pt-[35px]">
            <span className="flex-1 rounded-full bg-[#353535]" />
          </div>
        </div>
      </div>
      <div className="flex h-[17px] w-[742px] shrink-0 items-center gap-[3px] border-t border-black pl-[4px]">
        <button aria-label="スイッチを表示" className={`w-[15px] ${box}`}><Icon className="size-[12px]" box="0 0 12 12"><path d="M0.600 8V0.600H8M2.600 10V2.600H9.500M4.600 4.600h6.800v6.800H4.600zM8 6.500v3" /></Icon></button>
        <button aria-label="転送制御を表示" className={`w-[16px] ${box}`}><Icon className="size-[12px]" box="0 0 12 12"><circle cx="4.300" cy="4.300" r="3.700" /><path d="M5 5h6.400v6.400H5z" /></Icon></button>
        <button aria-label="イン/アウトを表示" className="text-[#a0a0a0]"><Icon className="h-[12px] w-[12px]" box="0 0 12 12"><path d="M2.500 0.500h2.500v1h2v-1h2.500v4l2.500 1.500-2.500 1.500v4H7v-1H5v1H2.500v-4L0 6l2.500-1.500z" fill="currentColor" stroke="none" /></Icon></button>
        <div className="ml-[584px] flex items-center text-[#b0b0b0]">
          <button aria-label="ズームアウト"><Icon className="h-[5px] w-[10px]" box="0 0 10 5"><path d="M0 5l3-3 1.500 1L7 0l3 5z" fill="currentColor" stroke="none" /></Icon></button>
          <input
            type="range"
            aria-label="タイムラインズーム"
            defaultValue="0"
            className="ml-[11px] mr-[11px] h-[11px] w-[49px] appearance-none bg-transparent [&::-webkit-slider-runnable-track]:h-[3px] [&::-webkit-slider-runnable-track]:rounded-full [&::-webkit-slider-runnable-track]:bg-[#3f3f3f] [&::-webkit-slider-thumb]:-mt-[4px] [&::-webkit-slider-thumb]:size-[11px] [&::-webkit-slider-thumb]:appearance-none [&::-webkit-slider-thumb]:rounded-full [&::-webkit-slider-thumb]:border-2 [&::-webkit-slider-thumb]:border-[#a0a0a0] [&::-webkit-slider-thumb]:bg-[#232323]"
          />
          <button aria-label="ズームイン"><Icon className="h-[7px] w-[16px]" box="0 0 16 7"><path d="M0 7l5-5.500L6.500 3 4 7zM5 7l5.500-7L16 7z" fill="currentColor" stroke="none" /></Icon></button>
        </div>
      </div>
    </section>
  );
}

export default function App() {
  return (
    <div className={`flex h-screen w-full flex-col overflow-hidden bg-[#161616] ${JP}`}>
      <TitleBar />
      <ToolBar />
      <main className="mt-[4px] flex min-h-0 flex-1 gap-[4px] pl-[2px]">
        <ProjectPanel />
        <CompositionPanel />
        <RightDock />
      </main>
      <div className="h-[4px] shrink-0" />
      <Timeline />
      <footer className="flex h-[2px] shrink-0 bg-[#0d0d18]">
        <span className="ml-[48px] w-[344px] bg-[#f0f0f0]" />
        <span className="ml-[149px] w-[48px] bg-[#4a4a55]" />
      </footer>
    </div>
  );
}
